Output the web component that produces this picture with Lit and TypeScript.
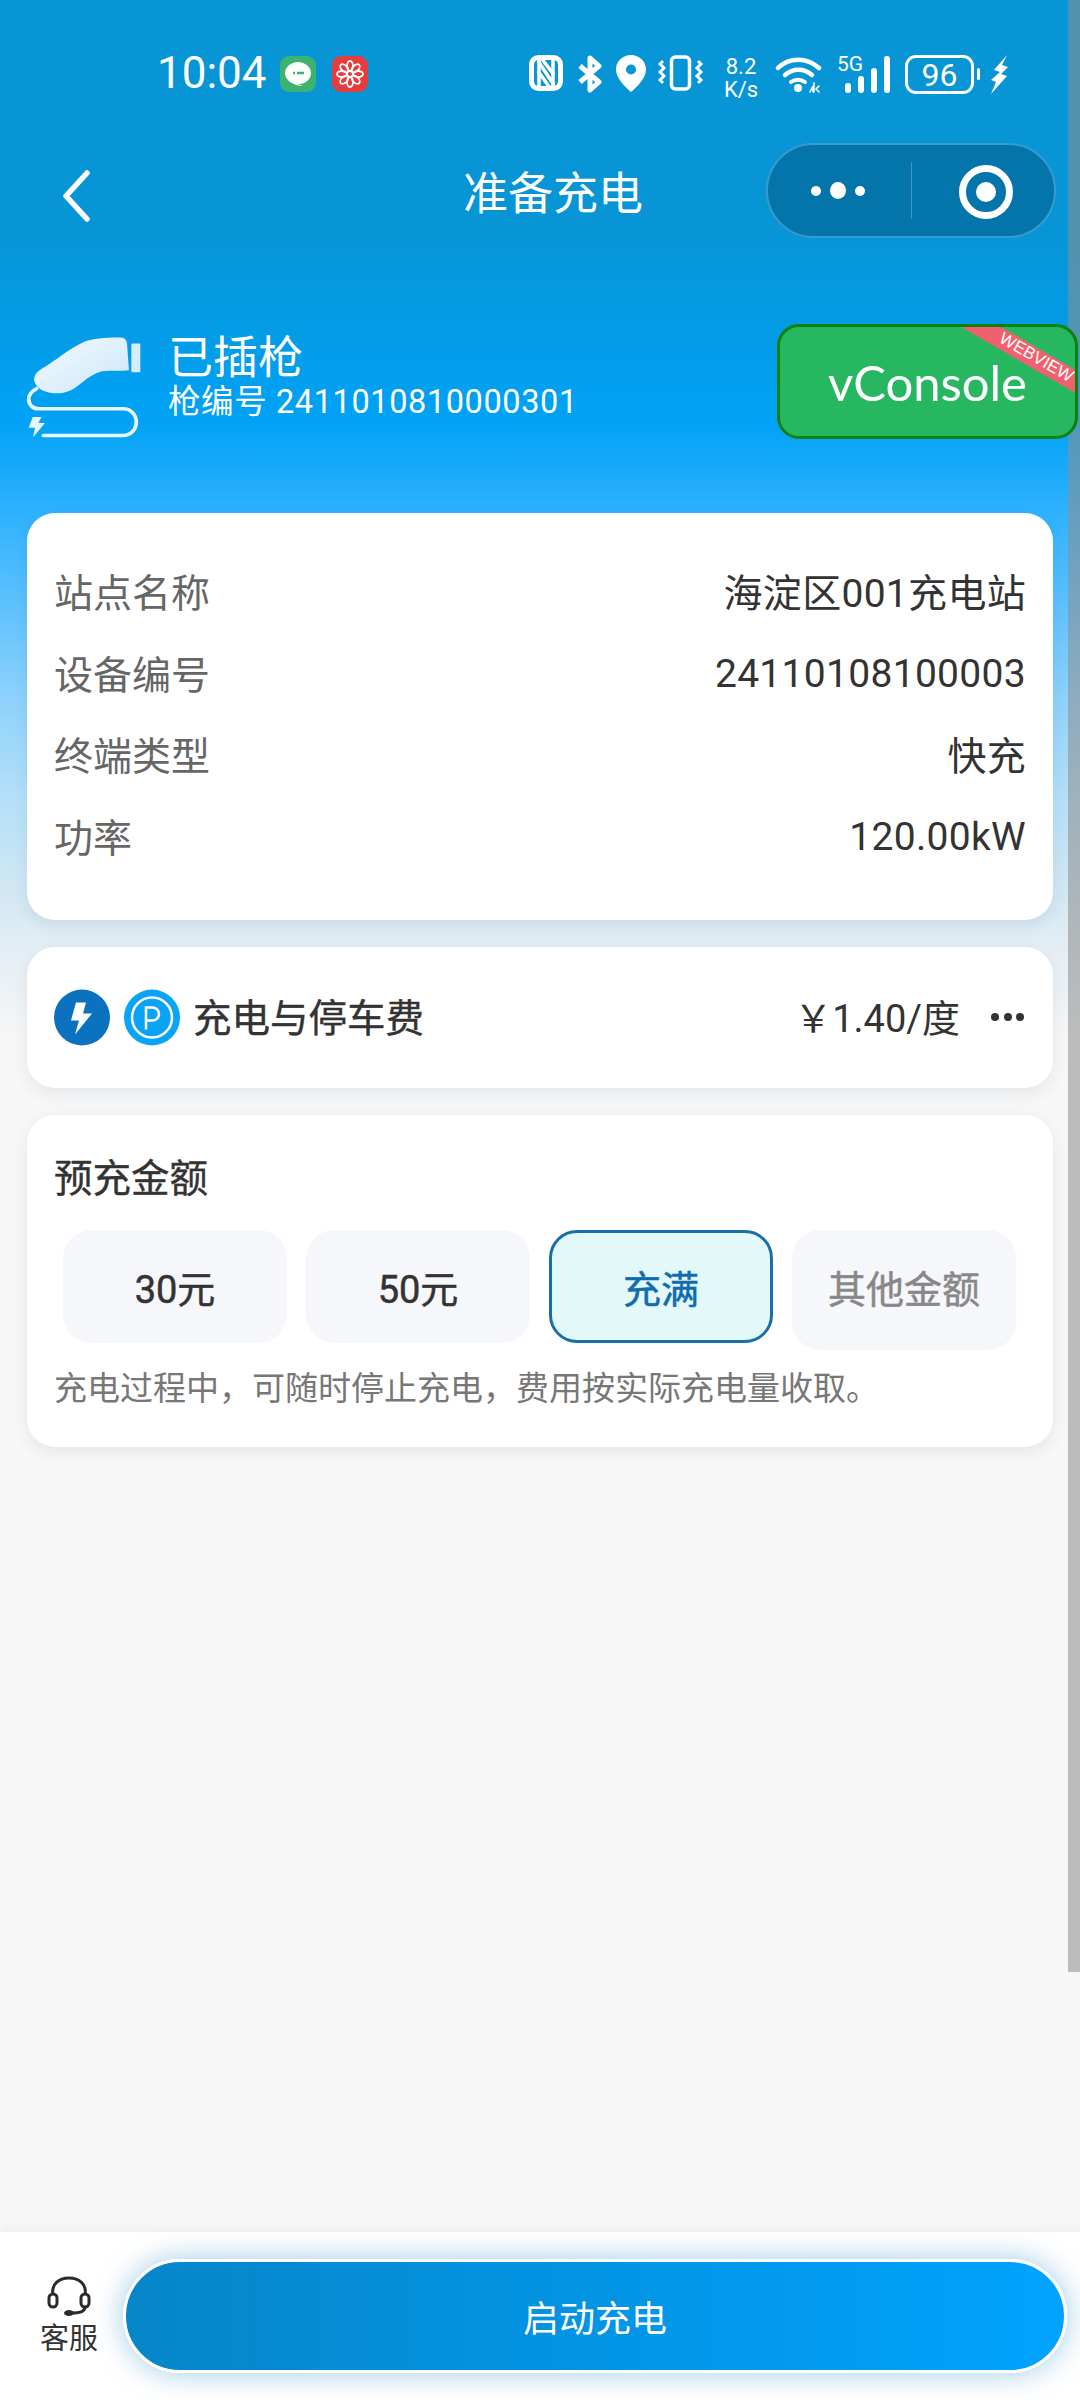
import { LitElement, html, css, svg } from 'lit';
import { customElement } from 'lit/decorators.js';

const infoRows = [
  ['站点名称', '海淀区001充电站'],
  ['设备编号', '24110108100003'],
  ['终端类型', '快充'],
  ['功率', '120.00kW'],
];

const amounts = [
  { label: '30元', kind: '' },
  { label: '50元', kind: '' },
  { label: '充满', kind: 'active' },
  { label: '其他金额', kind: 'other' },
];

const nfcIcon = svg`<svg width="34" height="36" viewBox="0 0 34 36" fill="none" stroke="#fff">
  <rect x="2.500" y="2.500" width="29" height="31" rx="7" stroke-width="5"/>
  <path d="M10 3v30M24 3v30" stroke-width="3.500"/>
  <path d="M9 6l16 24M9 16l12 17M13 4l12 16" stroke-width="3.500"/>
</svg>`;

const btIcon = svg`<svg width="25" height="38" viewBox="0 0 25 38" fill="none" stroke="#fff" stroke-width="5" stroke-linejoin="round">
  <path d="M2 11L21 27 12 35V3l9 8L2 27"/>
</svg>`;

const pinIcon = svg`<svg width="30" height="37" viewBox="0 0 30 37">
  <path fill="#fff" fill-rule="evenodd" d="M15 0c8.300 0 15 6.400 15 14.500C30 23 21 32 15 37 9 32 0 23 0 14.500 0 6.400 6.700 0 15 0zm0 9.500a5 5 0 100 10 5 5 0 000-10z"/>
</svg>`;

const vibrateIcon = svg`<svg width="45" height="36" viewBox="0 0 45 36" fill="none" stroke="#fff">
  <rect x="13.500" y="2" width="18" height="32" rx="4" stroke-width="3.500"/>
  <path d="M5 6l-3 3 4 4-4 4 4 4-4 4 3 3M40 6l3 3-4 4 4 4-4 4 4 4-3 3" stroke-width="3"/>
</svg>`;

const wifiIcon = svg`<svg width="47" height="38" viewBox="0 0 47 38" fill="none" stroke="#fff" stroke-linecap="round">
  <path d="M3 13C14 2 32 2 44 13" stroke-width="4.500"/>
  <path d="M10 20c8-7 19-7 27 0" stroke-width="4.500"/>
  <path d="M16 27c4-3 10-3 14 0" stroke-width="4"/>
  <circle cx="23" cy="33" r="4" fill="#fff" stroke="none"/>
  <path d="M35 37l3-6v6M39 28v9M44 31l-3 3 3 3" stroke-width="1.500"/>
</svg>`;

const signalBars = svg`<svg width="45" height="37" viewBox="0 0 45 37" fill="#fff">
  <rect x="0" y="27" width="6" height="10" rx="3"/>
  <rect x="13" y="20" width="6" height="17" rx="3"/>
  <rect x="26" y="12" width="6" height="25" rx="3"/>
  <rect x="39" y="0" width="6" height="37" rx="3"/>
</svg>`;

const chargeBolt = svg`<svg width="19" height="39" viewBox="0 0 19 39" fill="#fff">
  <path d="M17 0L4 15l6 2-9 8 5 2-5 12 16-18-6-2 7-7-6-2z"/>
</svg>`;

const gunIcon = svg`<svg width="117" height="104" viewBox="50 75 350 310" fill="none">
  <defs>
    <linearGradient id="gun" x1="0" y1="0" x2="1" y2="1">
      <stop offset="0" stop-color="#f6fbff"/>
      <stop offset="1" stop-color="#c9e6f8"/>
    </linearGradient>
  </defs>
  <path fill="url(#gun)" d="M74 205c2-12 10-22 24-30 40-24 80-60 130-82 20-8 70-12 106-11 10 0 16 6 18 16l6 82c-20 3-56 0-78 3-14 2-34 12-50 24-22 17-40 35-68 40-20 3-40 2-60-6-14-6-28-20-28-36z"/>
  <rect x="365" y="100" width="27" height="86" rx="4" fill="#d6ecfa"/>
  <path stroke="#eaf6fe" stroke-width="11" stroke-linecap="round" d="M82 235c-16 8-24 20-24 32 0 16 12 28 30 28h252c24 0 40 18 40 40s-16 40-40 40H102"/>
  <path fill="#eaf6fe" d="M70 320h26l-9 18h20l-36 42 6-28H58z"/>
</svg>`;

@customElement('app-root')
export class AppRoot extends LitElement {
  static styles = css`
    :host {
      display: block;
      width: 1080px;
      height: 2400px;
      overflow: hidden;
      font-family: 'Roboto', 'Noto Sans CJK SC', sans-serif;
      color: #333;
    }

    .page {
      position: relative;
      height: 2400px;
      display: flex;
      flex-direction: column;
      background: linear-gradient(
        180deg,
        #0795d6 0,
        #0795d6 230px,
        #00a2f5 420px,
        #2db1fe 510px,
        #8fd2fc 700px,
        #b5e0f8 800px,
        #d5e8f3 900px,
        #e4eef4 950px,
        #f7f7f7 1040px
      );
    }

    .status {
      height: 143px;
      flex: none;
      display: flex;
      align-items: flex-start;
      padding: 53px 71px 0 157px;
      box-sizing: border-box;
      color: #fff;
    }

    .time {
      font-size: 44px;
      line-height: 40px;
      width: 123px;
    }

    .app-badge {
      width: 36px;
      height: 36px;
      border-radius: 9px;
      margin-top: 3px;
      display: flex;
      align-items: center;
      justify-content: center;
    }

    .app-badge.green {
      background: #3cb371;
    }

    .app-badge.red {
      background: #e53d3d;
      margin-left: 16px;
    }

    .status-right {
      margin-left: auto;
      display: flex;
      align-items: flex-start;
      padding-top: 2px;
    }

    .status-right svg {
      display: block;
    }

    .status-gap {
      width: 13px;
    }

    .status-gap.wide {
      width: 15px;
    }

    .status-gap.narrow {
      width: 12px;
    }

    .speed {
      width: 38px;
      margin: 0 15px 0 19px;
      text-align: center;
      font-size: 22px;
      line-height: 23px;
    }

    .net {
      position: relative;
      width: 53px;
      height: 38px;
      margin-left: 15px;
      display: flex;
      align-items: flex-end;
      justify-content: flex-end;
    }

    .net span {
      position: absolute;
      left: 0;
      top: -2px;
      font-size: 21px;
      line-height: 22px;
    }

    .battery {
      width: 69px;
      height: 39px;
      box-sizing: border-box;
      border: 3px solid #fff;
      border-radius: 11px;
      margin-left: 15px;
      display: flex;
      align-items: center;
      justify-content: center;
      font-size: 32px;
      line-height: 32px;
    }

    .battery-tip {
      width: 3px;
      height: 12px;
      background: #fff;
      border-radius: 2px;
      margin: 13px 10px 0 3px;
    }

    .nav {
      height: 95px;
      flex: none;
      display: flex;
      align-items: center;
      padding: 0 24px 0 60px;
      color: #fff;
    }

    .back {
      width: 32px;
      height: 52px;
      margin-top: 10px;
      display: block;
    }

    .nav-title {
      margin-left: 371px;
      margin-top: 8px;
      font-size: 45px;
      line-height: 60px;
      white-space: nowrap;
    }

    .capsule {
      margin-left: auto;
      width: 290px;
      height: 95px;
      box-sizing: border-box;
      border: 2px solid #3a9ad0;
      border-radius: 48px;
      background: #0475ab;
      display: flex;
      align-items: center;
    }

    .capsule-more {
      width: 143px;
      padding-right: 4px;
      box-sizing: border-box;
      display: flex;
      justify-content: center;
      align-items: center;
      gap: 9px;
    }

    .capsule-more i {
      width: 10px;
      height: 10px;
      border-radius: 50%;
      background: #fff;
    }

    .capsule-more i.big {
      width: 16px;
      height: 17px;
    }

    .capsule-line {
      width: 1px;
      height: 57px;
      background: #3e97c6;
    }

    .capsule-target {
      flex: 1;
      padding-left: 6px;
      display: flex;
      justify-content: center;
    }

    .capsule-target svg {
      display: block;
      margin-top: 2px;
    }

    .charger {
      flex: none;
      height: 100px;
      margin-top: 99px;
      padding-left: 26px;
      display: flex;
      align-items: center;
      gap: 25px;
      color: #fff;
    }

    .charger svg {
      display: block;
    }

    .charger-text {
      padding-bottom: 20px;
    }

    .charger-state {
      font-size: 45px;
      line-height: 52px;
    }

    .charger-no {
      font-size: 32.500px;
      line-height: 38px;
      margin-top: -2px;
      letter-spacing: 0.6px;
    }

    .card {
      margin: 0 27px;
      background: #fff;
      border-radius: 28px;
      box-shadow: 0 5px 16px rgba(20, 70, 110, 0.09);
    }

    .info {
      margin-top: 76px;
      padding: 36px 27px 44px 27px;
    }

    .info-row {
      height: 81.700px;
      display: flex;
      align-items: center;
      justify-content: space-between;
      font-size: 39px;
      letter-spacing: 0.3px;
    }

    .info-row span:first-child {
      color: #666;
      letter-spacing: 0;
    }

    /* rows 2 and 4 hold only latin digits, which sit higher than CJK */
    .info-row:nth-child(even) span:last-child {
      padding-top: 5px;
    }

    .fee {
      margin-top: 27px;
      height: 141px;
      padding: 0 29px 0 27px;
      display: flex;
      align-items: center;
    }

    .fee svg {
      display: block;
      flex: none;
    }

    .fee-p {
      margin-left: 14px;
    }

    .fee-name {
      margin: -4px 0 0 13px;
      font-size: 38.500px;
      -webkit-text-stroke: 0.4px #333;
    }

    .fee-price {
      margin: -4px 0 0 auto;
      font-size: 38px;
    }

    .fee-more {
      margin-left: 31px;
      width: 33px;
      display: flex;
      justify-content: space-between;
    }

    .fee-more i {
      width: 8px;
      height: 8px;
      border-radius: 50%;
      background: #333;
    }

    .amount {
      margin-top: 27px;
      padding: 42px 28px 36px 27px;
    }

    .amount-title {
      font-size: 38.500px;
      line-height: 44px;
      -webkit-text-stroke: 0.4px #333;
    }

    .amount-list {
      margin: 29px 8px 17px 9px;
      height: 120px;
      display: flex;
      gap: 19px;
      align-items: flex-start;
    }

    .amount-item {
      width: 224px;
      height: 113px;
      box-sizing: border-box;
      border-radius: 28px;
      background: #f5f7fb;
      display: flex;
      align-items: center;
      justify-content: center;
      font-size: 38px;
      color: #333;
      -webkit-text-stroke: 0.5px currentColor;
    }

    .amount-item.active {
      background: #e3f8f8;
      border: 3px solid #1a6fa8;
      color: #0f6cb0;
    }

    .amount-item.other {
      height: 120px;
      padding-bottom: 7px;
      color: #888;
    }

    .amount-note {
      font-size: 33px;
      line-height: 44px;
      color: #777;
      white-space: nowrap;
    }

    .bottom {
      margin-top: auto;
      height: 168px;
      flex: none;
      background: #fff;
      box-shadow: 0 -3px 10px rgba(0, 0, 0, 0.04);
      display: flex;
      align-items: center;
      padding-left: 40px;
    }

    .service {
      width: 58px;
      display: flex;
      flex-direction: column;
      align-items: center;
      font-size: 29px;
      line-height: 34px;
    }

    .service svg {
      display: block;
      margin-bottom: 6px;
    }

    .start {
      margin-left: 25px;
      width: 944px;
      height: 114px;
      box-sizing: border-box;
      border: 3px solid #fff;
      border-radius: 57px;
      background: linear-gradient(90deg, #0686c9, #00a3ff);
      box-shadow: 0 0 30px rgba(0, 120, 190, 0.38);
      color: #fff;
      font-size: 36px;
      display: flex;
      align-items: center;
      justify-content: center;
    }

    .scrollbar {
      position: absolute;
      top: 0;
      right: 0;
      width: 12px;
      height: 1972px;
      background: rgba(142, 142, 142, 0.57);
    }

    .vconsole {
      position: absolute;
      left: 777px;
      top: 324px;
      width: 301px;
      height: 115px;
      box-sizing: border-box;
      border: 3px solid #0a820f;
      border-radius: 22px;
      background: #28b761;
      color: #fff;
      font-family: 'Lato', 'Open Sans', sans-serif;
      font-size: 49px;
      display: flex;
      align-items: center;
      justify-content: center;
      overflow: hidden;
    }

    .ribbon {
      position: absolute;
      left: 160px;
      top: 24px;
      width: 200px;
      height: 20px;
      padding-right: 10px;
      box-sizing: border-box;
      background: #f0616f;
      color: #fff;
      font-family: 'Liberation Sans', sans-serif;
      font-size: 17px;
      line-height: 17px;
      text-align: center;
      transform: rotate(30deg);
    }
  `;

  render() {
    return html`
      <div class="page">
        <div class="status">
          <div class="time">10:04</div>
          <div class="app-badge green">
            <svg width="28" height="26" viewBox="0 0 28 26">
              <path fill="#fff" d="M14 1c7 0 13 5 13 11s-5 11-12 11h-1l5 2c-4 0-8-1-11-3C4 20 1 16 1 12 1 6 7 1 14 1z"/>
              <path stroke="#3cb371" stroke-width="2.500" d="M9 12h2M13 12h7"/>
            </svg>
          </div>
          <div class="app-badge red">
            <svg width="28" height="28" viewBox="-14 -14 28 28" fill="none" stroke="#fff" stroke-width="1.800">
              <circle r="3"/>
              ${[0, 45, 90, 135, 180, 225, 270, 315].map(
                (a) => svg`<ellipse cx="0" cy="-8" rx="3" ry="5" transform="rotate(${a})"/>`
              )}
            </svg>
          </div>
          <div class="status-right">
            ${nfcIcon}
            <div class="status-gap wide"></div>
            ${btIcon}
            <div class="status-gap"></div>
            ${pinIcon}
            <div class="status-gap narrow"></div>
            ${vibrateIcon}
            <div class="speed">8.2<br />K/s</div>
            ${wifiIcon}
            <div class="net"><span>5G</span>${signalBars}</div>
            <div class="battery">96</div>
            <div class="battery-tip"></div>
            ${chargeBolt}
          </div>
        </div>

        <div class="nav">
          <svg class="back" viewBox="0 0 32 52" fill="none" stroke="#fff" stroke-width="5.500" stroke-linecap="round" stroke-linejoin="round">
            <path d="M27 3L6 26l21 23"/>
          </svg>
          <div class="nav-title">准备充电</div>
          <div class="capsule">
            <div class="capsule-more"><i></i><i class="big"></i><i></i></div>
            <div class="capsule-line"></div>
            <div class="capsule-target">
              <svg width="54" height="54" viewBox="0 0 54 54" fill="none">
                <circle cx="27" cy="27" r="23.500" stroke="#fff" stroke-width="7"/>
                <circle cx="27" cy="27" r="10" fill="#fff"/>
              </svg>
            </div>
          </div>
        </div>

        <div class="charger">
          ${gunIcon}
          <div class="charger-text">
            <div class="charger-state">已插枪</div>
            <div class="charger-no">枪编号 2411010810000301</div>
          </div>
        </div>

        <div class="card info">
          ${infoRows.map(
            ([name, value]) => html`
              <div class="info-row"><span>${name}</span><span>${value}</span></div>
            `
          )}
        </div>

        <div class="card fee">
          <svg width="56" height="57" viewBox="0 0 56 56">
            <circle cx="28" cy="28" r="28" fill="#0b72c0"/>
            <path fill="#fff" d="M32 13H22l-5 18h8l-4 14 17-21h-9z"/>
          </svg>
          <svg class="fee-p" width="56" height="57" viewBox="0 0 56 56" fill="none">
            <circle cx="28" cy="28" r="28" fill="#0aa3f5"/>
            <circle cx="28" cy="28" r="20" stroke="#fff" stroke-width="2.500"/>
            <path stroke="#fff" stroke-width="2.500" d="M22 40V18h6.500a6.500 6.500 0 010 13H22"/>
          </svg>
          <div class="fee-name">充电与停车费</div>
          <div class="fee-price">￥1.40/度</div>
          <div class="fee-more"><i></i><i></i><i></i></div>
        </div>

        <div class="card amount">
          <div class="amount-title">预充金额</div>
          <div class="amount-list">
            ${amounts.map((a) => html`<div class="amount-item ${a.kind}">${a.label}</div>`)}
          </div>
          <div class="amount-note">充电过程中，可随时停止充电，费用按实际充电量收取。</div>
        </div>

        <div class="bottom">
          <div class="service">
            <svg width="44" height="40" viewBox="0 0 44 40" fill="none" stroke="#2b2b2b" stroke-width="3">
              <path d="M6 19C4 8 12 2 22 2s18 6 16 17"/>
              <rect x="2" y="18" width="8" height="13" rx="4"/>
              <rect x="34" y="18" width="8" height="13" rx="4"/>
              <path d="M38 31c0 4-5 6-13 6"/>
              <ellipse cx="22" cy="37" rx="5" ry="3" fill="#2b2b2b" stroke="none"/>
            </svg>
            客服
          </div>
          <div class="start">启动充电</div>
        </div>

        <div class="scrollbar"></div>
        <div class="vconsole">
          vConsole
          <div class="ribbon">WEBVIEW</div>
        </div>
      </div>
    `;
  }
}

declare global {
  interface HTMLElementTagNameMap {
    'app-root': AppRoot;
  }
}
